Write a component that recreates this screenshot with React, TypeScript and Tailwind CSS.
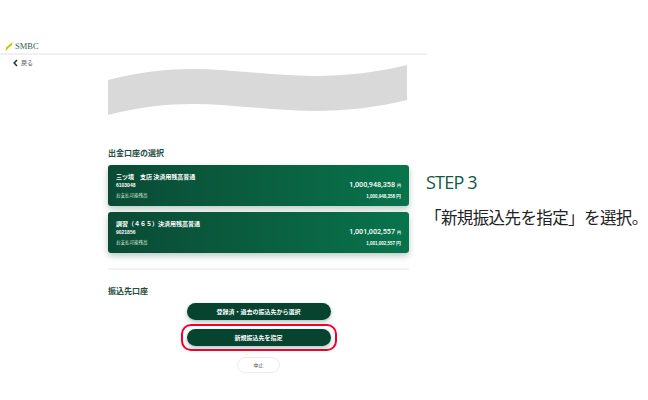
export default function App() {
  return (
    <div className="w-[648px] h-[400px] overflow-hidden bg-white flex font-['Noto_Sans_CJK_JP','Noto_Sans',sans-serif]">
      <div className="w-[427px] shrink-0 flex flex-col pt-[40px]">
        <div className="h-[13px] border-b-2 border-[#f0f0f0] box-content flex items-center pl-[5px] gap-[2px]">
          <svg width="8" height="9" viewBox="0 0 8 9">
            <path d="M0.5 9 L1 5.5 L3.8 3.2 L3.2 6.5 Z M3.8 3 L7.5 0 L7 3 L3.4 6 Z" fill="#b5d200" />
          </svg>
          <span className="font-['Liberation_Serif',serif] text-[8.5px] leading-none text-[#2f5f4d]">SMBC</span>
        </div>
        <div className="flex items-center pl-[13px] gap-[3px] h-[15px]">
          <svg width="5" height="8" viewBox="0 0 5 8">
            <path d="M4 1 L1.2 4 L4 7" fill="none" stroke="#0c4a35" strokeWidth="1.6" />
          </svg>
          <span className="text-[6px] leading-none text-[#555]">戻る</span>
        </div>
        <div className="pl-[108px] mt-[-5px]">
          <svg width="300" height="51" viewBox="0 0 300 51" className="block">
            <path
              d="M0 15 C30 7 60 4 85 4 C125 4 165 11 205 11 C240 11 270 7 299 0 L299 35 C270 42 240 46 205 46 C165 46 125 39 85 39 C60 39 30 42 0 50 Z"
              fill="#d9d9d9"
            />
          </svg>
        </div>
        <div className="ml-[108px] w-[301px] mt-[31px]">
          <h2 className="text-[8px] leading-[12px] font-bold text-[#234d3f]">出金口座の選択</h2>
          <div className="mt-[6px] flex flex-col gap-[6px]">
            <Card name="三ツ境　支店 決済用残高普通" no="6103048" amount="1,000,948,358" sub="1,000,948,358" />
            <Card name="調習（４６５）決済用残高普通" no="9021856" amount="1,001,002,557" sub="1,001,002,557" />
          </div>
          <div className="mt-[15px] h-[2px] bg-[#f2f2f2]" />
          <h2 className="mt-[15px] text-[8px] leading-[12px] font-bold text-[#234d3f]">振込先口座</h2>
          <div className="flex flex-col items-center mt-[6px]">
            <Btn label="登録済・過去の振込先から選択" />
            <div className="mt-[4px] w-[156px] h-[27px] rounded-[10px] border-2 border-[#f5002a] flex items-center justify-center">
              <Btn label="新規振込先を指定" />
            </div>
            <div className="mt-[6px] w-[43px] h-[16px] rounded-full bg-white border border-[#ececec] flex items-center justify-center text-[5px] text-[#444]">
              中止
            </div>
          </div>
        </div>
      </div>
      <div className="flex-1 pt-[171px] whitespace-nowrap">
        <div className="ml-[-1px] font-['Open_Sans','Noto_Sans',sans-serif] text-[18px] leading-[22px] text-[#0f5a43] tracking-[-0.8px]">STEP 3</div>
        <div className="mt-[12px] ml-[-2px] text-[16.5px] leading-[24px] text-[#222] tracking-[-0.6px]">「新規振込先を指定」を選択。</div>
      </div>
    </div>
  );
}

function Card({ name, no, amount, sub }: { name: string; no: string; amount: string; sub: string }) {
  return (
    <div className="h-[41px] rounded-[3px] bg-gradient-to-r from-[#0a4a35] to-[#07744c] shadow-[0_3px_6px_rgba(30,80,60,0.3)] px-[8px] text-white flex justify-between">
      <div className="flex flex-col pt-[7px]">
        <div className="text-[6px] leading-[9px] font-bold">{name}</div>
        <div className="text-[5px] leading-[7px] mt-[1px] font-['Liberation_Sans',sans-serif] font-bold">{no}</div>
        <div className="text-[4.5px] leading-[6px] mt-[3px] text-[#d5e5dd]">お支払可能残高</div>
      </div>
      <div className="flex flex-col items-end pt-[15px]">
        <div className="font-['Roboto',sans-serif] font-medium text-[7.2px] leading-[10px] whitespace-nowrap">
          {amount}
          <span className="text-[4px] font-bold ml-[2px]">円</span>
        </div>
        <div className="font-['Liberation_Sans',sans-serif] text-[4.5px] leading-[6px] mt-[3px] font-bold whitespace-nowrap">
          {sub}
          <span className="ml-[1px]">円</span>
        </div>
      </div>
    </div>
  );
}

function Btn({ label }: { label: string }) {
  return (
    <div className="w-[144px] h-[17px] shrink-0 rounded-full bg-[#064430] shadow-[0_2px_4px_rgba(30,80,60,0.35)] flex items-center justify-center text-[6px] font-bold text-white">
      {label}
    </div>
  );
}
